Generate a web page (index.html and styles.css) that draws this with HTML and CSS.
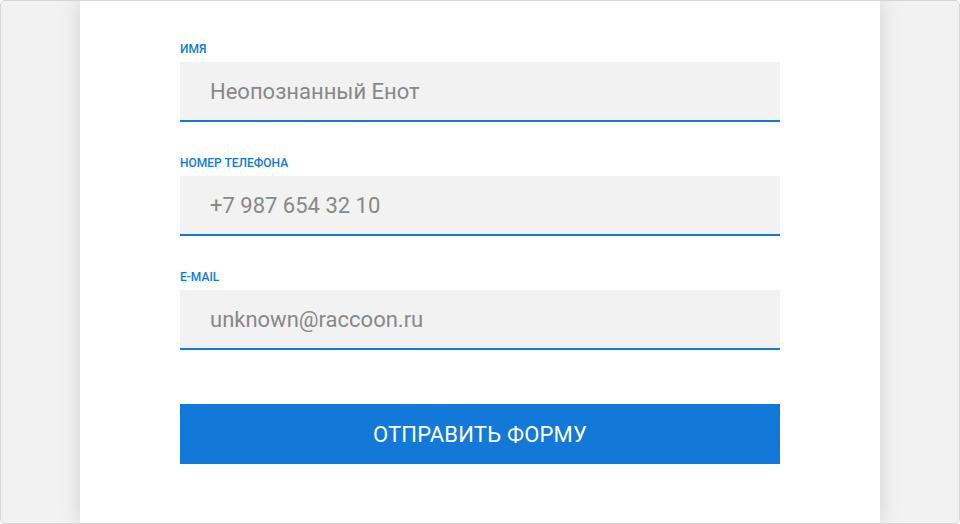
FILE: index.html
```html
<!DOCTYPE html>
<html lang="ru">
<head>
<meta charset="utf-8">
<title>Форма</title>
<link rel="stylesheet" href="styles.css">
</head>
<body>
<div class="frame">
  <div class="card">
    <form class="form">
      <div class="field">
        <label class="label">Имя</label>
        <div class="input">Неопознанный Енот</div>
      </div>
      <div class="field">
        <label class="label">Номер телефона</label>
        <div class="input">+7 987 654 32 10</div>
      </div>
      <div class="field">
        <label class="label">E-mail</label>
        <div class="input">unknown@raccoon.ru</div>
      </div>
      <div class="button">Отправить форму</div>
    </form>
  </div>
</div>
</body>
</html>
```

FILE: styles.css
```css
* { box-sizing: border-box; }
html, body { margin: 0; padding: 0; }
body { font-family: Roboto, "Noto Sans", Arial, sans-serif; background: #fff; }

.frame {
  width: 960px;
  height: 524px;
  border: 1px solid #d6d6d6;
  border-radius: 5px;
  background: #f2f2f2;
  overflow: hidden;
  display: flex;
  justify-content: center;
}

.card {
  width: 800px;
  height: 100%;
  background: #fff;
  box-shadow: 0 0 20px rgba(0, 0, 0, 0.14);
  display: flex;
  justify-content: center;
  padding-top: 41px;
}

.form {
  width: 600px;
  display: flex;
  flex-direction: column;
  gap: 34px;
}

.field {
  display: flex;
  flex-direction: column;
  gap: 6px;
}

.label {
  font-size: 12px;
  line-height: 14px;
  font-weight: 500;
  text-transform: uppercase;
  color: #1279d8;
}

.input {
  height: 60px;
  background: #f2f2f2;
  border-bottom: 2px solid #1279d8;
  padding: 0 30px;
  display: flex;
  align-items: center;
  font-size: 22px;
  color: #888;
  padding-top: 1px;
}

.button {
  margin-top: 20px;
  height: 60px;
  background: #1279d8;
  color: #fff;
  display: flex;
  align-items: center;
  justify-content: center;
  font-size: 22px;
  text-transform: uppercase;
  letter-spacing: 0.2px;
}
```
